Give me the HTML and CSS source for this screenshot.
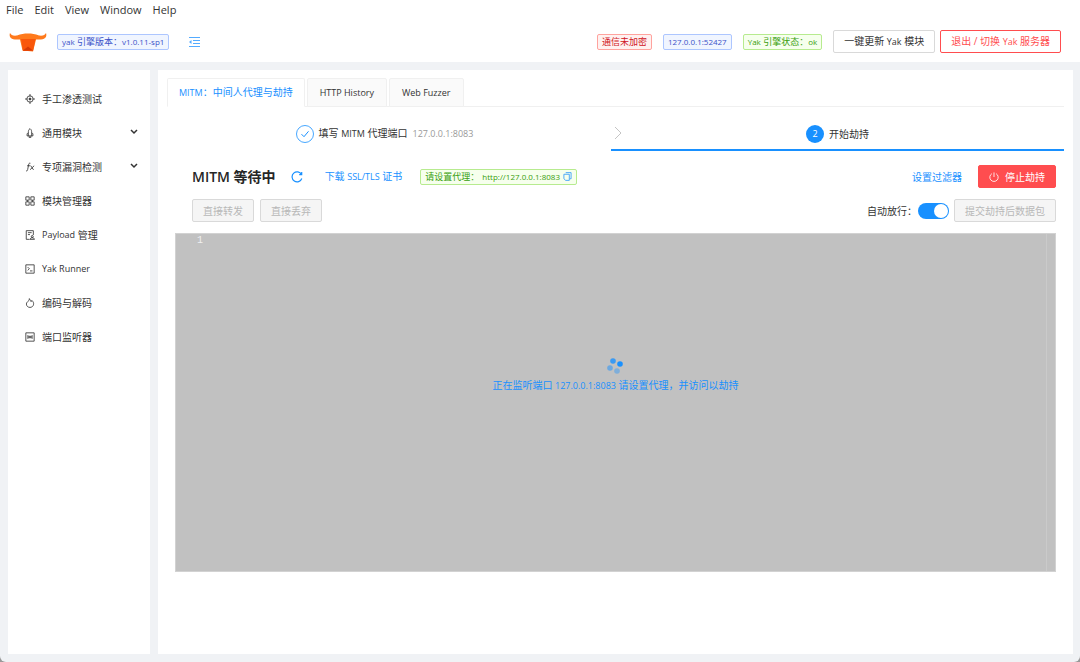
FILE: index.html
```
<!DOCTYPE html>
<html lang="zh-CN">
<head>
  <meta charset="UTF-8">
  <title>Yakit</title>
  <link rel="stylesheet" href="styles.css">
</head>
<body>
  <div class="app">
    <nav class="menubar">
      <button>File</button>
      <button>Edit</button>
      <button>View</button>
      <button>Window</button>
      <button>Help</button>
    </nav>

    <header class="header">
      <svg class="logo" viewBox="0 0 38 20">
        <path d="M1 1C0 4 1 7 6 7.500L11 7.500L13.500 18.500L24 19.500L27 7.500L32 7.500C37 7 38 4 37 1C36 3 34 4 30 3.500C26 2 23 1.500 19 1.500C15 1.500 12 2 8 3.500C4 4 2 3 1 1Z" fill="#ff7a1c"/>
        <path d="M12 7L26.500 7L24 19L14 19Z" fill="#f9570b"/>
        <path d="M14 18.500L19 14.500L24 18.500Z" fill="#d63a05"/>
      </svg>
      <span class="tag blue"><span class="en">yak</span> 引擎版本：<span class="en">v1.0.11-sp1</span></span>
      <button class="collapse" aria-label="收起菜单">
        <svg viewBox="0 0 12 10" fill="none" stroke="#54abff"><path d="M1 .5H12M5 3.500H12M5 6.500H12M1 9.500H12"/><path d="M3.500 3L1 5L3.500 7Z" fill="#54abff" stroke="none"/></svg>
      </button>
      <div class="header-right">
        <span class="tag red">通信未加密</span>
        <span class="tag blue"><span class="en">127.0.0.1:52427</span></span>
        <span class="tag green"><span class="en">Yak</span> 引擎状态：<span class="en">ok</span></span>
        <div class="header-buttons">
          <button class="btn">一键更新 <span class="en">Yak</span> 模块</button>
          <button class="btn danger-line">退出 / 切换 <span class="en">Yak</span> 服务器</button>
        </div>
      </div>
    </header>

    <div class="body">
      <aside class="sidebar">
        <a href="#">
          <svg class="icon" viewBox="0 0 12 12"><circle cx="6" cy="6" r="3.800"/><circle cx="6" cy="6" r="1.200" fill="#333"/><path d="M6 0V3M6 9V12M0 6H3M9 6H12"/></svg>
          手工渗透测试
        </a>
        <a href="#">
          <svg class="icon" viewBox="0 0 12 12"><path d="M6 .7C4.300 2 4 3.500 4 5.500L2.500 7V9.500H9.500V7L8 5.500C8 3.500 7.700 2 6 .7ZM4 5.500V9.500M8 5.500V9.500M5 9.500V11.500H7V9.500"/></svg>
          通用模块
          <svg class="arrow" viewBox="0 0 8 8"><path d="M1 1L4 4L7 1"/></svg>
        </a>
        <a href="#">
          <svg class="icon" viewBox="0 0 12 12"><path d="M6.500 1.500C5 1 4.500 2 4.300 3.500L3.200 9C3 10.500 2.300 11 1.200 10.500M2.500 4.500H6M6.500 4.500C8 4 8.500 9.500 10.500 9M11 4.500L6 9.300"/></svg>
          专项漏洞检测
          <svg class="arrow" viewBox="0 0 8 8"><path d="M1 1L4 4L7 1"/></svg>
        </a>
        <a href="#">
          <svg class="icon" viewBox="0 0 12 12"><path d="M1 1H5V5H1ZM7 1H11V5H7ZM1 7H5V11H1ZM7 7H11V11H7ZM3 5V7M9 5V7"/></svg>
          模块管理器
        </a>
        <a href="#">
          <svg class="icon" viewBox="0 0 12 12"><path d="M5.500 11.200H1.500V.8H10V6M3.500 3.200H8M3.500 5.500H6M6 11.200H11.500L10 9.300H7.500Z"/><circle cx="8.700" cy="7.800" r="1.200"/></svg>
          <span class="en">Payload</span>&nbsp;管理
        </a>
        <a href="#">
          <svg class="icon" viewBox="0 0 12 12"><path d="M1 1H11V11H1ZM3.200 3.700L5.200 5.700L3.200 7.700M6 8.300H9"/></svg>
          <span class="en">Yak Runner</span>
        </a>
        <a href="#">
          <svg class="icon" viewBox="0 0 12 12"><path d="M5 .8C6.500 2 7 3 7 4.200C8 4.200 8.300 3.500 8.300 3C10 4.500 10.500 6 10.300 7.500C10 10 8 11.300 6 11.300C3.500 11.300 1.700 9.500 1.700 7.300C1.700 5.500 3 4.500 4 3.700C5 3 5.200 2 5 .8Z"/></svg>
          编码与解码
        </a>
        <a href="#">
          <svg class="icon" viewBox="0 0 12 12"><path d="M1 1H11V11H1ZM3.500 3.700V8.300M8.500 3.700V8.300M5.200 4.500V7.500M6.800 4.500V7.500M3.500 6H5.200M6.800 6H8.500"/></svg>
          端口监听器
        </a>
      </aside>

      <main class="content">
        <div class="tabs">
          <button class="tab active"><span class="en">MITM</span>：中间人代理与劫持</button>
          <button class="tab"><span class="en">HTTP History</span></button>
          <button class="tab"><span class="en">Web Fuzzer</span></button>
        </div>

        <div class="steps">
          <div class="step">
            <svg class="step-icon" viewBox="0 0 18 18" fill="none" stroke="#1890ff"><circle cx="9" cy="9" r="8.500" stroke-width=".8"/><path d="M5.500 9.200L8 11.700L12.500 6.300"/></svg>
            <span>填写 <span class="en">MITM</span> 代理端口</span>
            <span class="sub en">127.0.0.1:8083</span>
          </div>
          <div class="step current">
            <svg class="step-arrow" viewBox="0 0 8 14"><path d="M1 1L7 7L1 13" fill="none" stroke="#c4c4c4"/></svg>
            <span class="step-icon number">2</span>
            <span>开始劫持</span>
          </div>
        </div>

        <div class="panel">
          <div class="row">
            <h1>MITM 等待中</h1>
            <button class="refresh" aria-label="刷新">
              <svg viewBox="0 0 12 12" fill="none" stroke="#1890ff" stroke-width="1.200"><path d="M10.500 3.500A5 5 0 1 0 10.800 7.500M10.700 1V3.700H8.200"/></svg>
            </button>
            <a class="link" href="#">下载 <span class="en">SSL/TLS</span> 证书</a>
            <span class="tag green proxy">请设置代理：<span class="en">http://127.0.0.1:8083</span><svg class="copy" viewBox="0 0 10 10" fill="none" stroke="#40a0f8"><path d="M3 .7H9V7.500H7.500M1 2.500H7V9.300H3L1 7.500Z"/></svg></span>
            <div class="right wide">
              <a class="link" href="#">设置过滤器</a>
              <button class="btn danger">
                <svg viewBox="0 0 12 12" fill="none" stroke="#fff"><path d="M3.500 2A5 5 0 1 0 8.500 2M6 .5V6"/></svg>
                停止劫持
              </button>
            </div>
          </div>
          <div class="row">
            <button class="btn" disabled>直接转发</button>
            <button class="btn" disabled>直接丢弃</button>
            <div class="right">
              <div class="auto">
                <label for="auto">自动放行：</label>
                <input class="switch" type="checkbox" id="auto" checked>
              </div>
              <button class="btn" disabled>提交劫持后数据包</button>
            </div>
          </div>
        </div>

        <div class="editor">
          <span class="line-number">1</span>
          <div class="loading">
            <svg viewBox="0 0 18 18" fill="#1890ff"><circle cx="7" cy="4" r="2.800" opacity=".8"/><circle cx="14" cy="7" r="2.800"/><circle cx="4" cy="11" r="2.800" opacity=".5"/><circle cx="11" cy="14" r="2.800" opacity=".4"/></svg>
            <div>正在监听端口 <span class="en">127.0.0.1:8083</span> 请设置代理，并访问以劫持</div>
          </div>
        </div>
      </main>
    </div>
  </div>
</body>
</html>
```
FILE: styles.css
```
* {
  box-sizing: border-box;
}

body {
  margin: 0;
  background: #999;
  font-family: "Open Sans", "Noto Sans CJK SC", sans-serif;
  font-size: 10px;
  line-height: 16px;
  color: #333;
}

button {
  font: inherit;
  color: inherit;
  background: none;
  border: none;
  padding: 0;
  cursor: pointer;
}

a {
  color: inherit;
  text-decoration: none;
}

svg {
  display: block;
  flex: none;
}

.en {
  font-size: 9px;
}

.app {
  display: flex;
  flex-direction: column;
  height: 100vh;
  background: #f0f2f5;
  border-radius: 0 0 6px 6px;
  overflow: hidden;
}

.menubar {
  display: flex;
  gap: 11px;
  height: 21px;
  padding: 0 6px 2px;
  background: #fff;
  font-size: 11px;
}

.header {
  display: flex;
  align-items: center;
  height: 41px;
  padding: 0 19px 0 9px;
  background: #fff;
}

.logo {
  width: 38px;
  height: 20px;
  margin-right: 10px;
}

.tag {
  display: inline-flex;
  align-items: center;
  height: 16px;
  padding: 0 4px;
  border: 1px solid;
  border-radius: 2px;
  font-size: 9px;
  line-height: 14px;
  white-space: pre;
}

.tag .en {
  font-size: 8px;
}

.blue {
  color: #3a52c8;
  background: #f0f5ff;
  border-color: #adc6ff;
}

.red {
  color: #cf1322;
  background: #fff1f0;
  border-color: #ffa39e;
}

.green {
  color: #389e0d;
  background: #f6ffed;
  border-color: #b7eb8f;
}

.collapse {
  margin-left: 19px;
}

.collapse svg {
  width: 12px;
  height: 10px;
}

.header-right {
  display: flex;
  align-items: center;
  gap: 11px;
  margin-left: auto;
}

.header-buttons {
  display: flex;
  gap: 5px;
}

.btn {
  height: 23px;
  padding: 0 10px;
  background: #fff;
  border: 1px solid #d9d9d9;
  border-radius: 2px;
  line-height: 20px;
}

.btn:disabled {
  color: #b8b8b8;
  background: #f5f5f5;
  cursor: not-allowed;
}

.danger-line {
  color: #ff4d4f;
  border-color: #ff4d4f;
}

.danger {
  display: flex;
  align-items: center;
  gap: 6px;
  color: #fff;
  background: #ff4d4f;
  border-color: #ff4d4f;
}

.danger svg {
  width: 10px;
  height: 10px;
}

.body {
  flex: 1;
  display: flex;
  gap: 8px;
  padding: 8px 7px 8px 8px;
  min-height: 0;
}

.sidebar {
  width: 142px;
  padding-top: 12px;
  background: #fff;
}

.sidebar a {
  display: flex;
  align-items: center;
  height: 34px;
  padding: 0 12px 0 17px;
}

.icon {
  width: 10px;
  height: 10px;
  margin-right: 7px;
  fill: none;
  stroke: #333;
}

.arrow {
  width: 8px;
  height: 8px;
  margin-left: auto;
  fill: none;
  stroke: #333;
  stroke-width: 1.5;
}

.content {
  flex: 1;
  display: flex;
  flex-direction: column;
  background: #fff;
}

.tabs {
  display: flex;
  gap: 2px;
  height: 29px;
  margin: 8px 9px 0;
  border-bottom: 1px solid #f0f0f0;
}

.tab {
  height: 29px;
  padding: 0 12px;
  background: #fafafa;
  border: 1px solid #f0f0f0;
  border-radius: 2px 2px 0 0;
}

.tab.active {
  padding: 0 11px;
  color: #1890ff;
  background: #fff;
  border-bottom-color: #fff;
}

.steps {
  display: flex;
  height: 44px;
  margin-right: 9px;
}

.step {
  position: relative;
  flex: 1;
  display: flex;
  align-items: center;
  justify-content: center;
  gap: 5px;
  padding-top: 11px;
  border-bottom: 2px solid transparent;
}

.current {
  border-bottom-color: #1890ff;
}

.step-icon {
  width: 18px;
  height: 18px;
}

.number {
  border-radius: 50%;
  background: #1890ff;
  color: #fff;
  font-size: 9px;
  line-height: 18px;
  text-align: center;
}

.step-arrow {
  position: absolute;
  left: 3px;
  top: 19px;
  width: 8px;
  height: 14px;
}

.sub {
  color: #999;
}

.panel {
  display: flex;
  flex-direction: column;
  gap: 11px;
  padding: 14px 17px 11px 34px;
}

.row {
  display: flex;
  align-items: center;
  gap: 6px;
}

h1 {
  margin: 0;
  font-size: 14px;
  font-weight: 600;
  line-height: 22px;
  color: #262626;
}

.refresh {
  margin: 0 16px 0 9px;
}

.refresh svg {
  width: 12px;
  height: 12px;
}

.link {
  color: #1890ff;
}

.proxy {
  gap: 3px;
  margin-left: 12px;
}

.copy {
  width: 9px;
  height: 9px;
}

.right {
  display: flex;
  align-items: center;
  gap: 5px;
  margin-left: auto;
}

.wide {
  gap: 16px;
}

.auto {
  display: flex;
  align-items: center;
  gap: 1px;
}

.switch {
  appearance: none;
  display: flex;
  width: 31px;
  height: 16px;
  margin: 0;
  padding: 1px;
  border-radius: 8px;
  background: #bfbfbf;
}

.switch::before {
  content: "";
  width: 14px;
  height: 14px;
  border-radius: 50%;
  background: #fff;
}

.switch:checked {
  justify-content: flex-end;
  background: #1890ff;
}

.editor {
  position: relative;
  flex: 1;
  display: flex;
  align-items: center;
  justify-content: center;
  margin: 0 17px 82px;
  padding-bottom: 54px;
  background: #c1c1c1;
  border: 1px solid #d2d2d2;
}

/* minimap / scrollbar divider */
.editor::after {
  content: "";
  position: absolute;
  top: 0;
  bottom: 0;
  right: 8px;
  border-right: 1px solid #cacaca;
}

.line-number {
  position: absolute;
  left: 21px;
  top: 0;
  color: #f0f0f0;
  font-family: "Liberation Mono", monospace;
  line-height: 14px;
}

.loading {
  display: flex;
  flex-direction: column;
  align-items: center;
  gap: 2px;
  color: #1890ff;
}

.loading svg {
  width: 18px;
  height: 18px;
}
```
